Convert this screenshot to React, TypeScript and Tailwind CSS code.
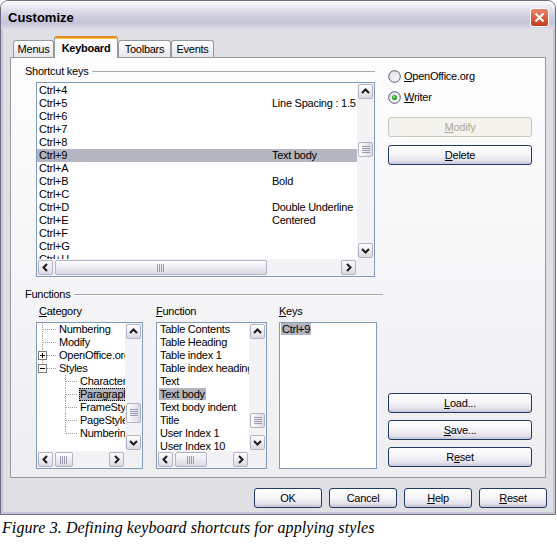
import React from "react";
import clsx from "clsx";

type Dir = "up" | "down" | "left" | "right";

function Arrow({ dir }: { dir: Dir }) {
  const pts = {
    up: "1,6 4.5,2.5 8,6",
    down: "1,3 4.5,6.5 8,3",
    left: "6,1 2.5,4.5 6,8",
    right: "3,1 6.5,4.5 3,8",
  }[dir];
  return (
    <svg width="9" height="9" viewBox="0 0 9 9">
      <polyline points={pts} fill="none" stroke="#1a1a1a" strokeWidth="2" />
    </svg>
  );
}

function ScrollButton({ dir }: { dir: Dir }) {
  return (
    <div className="w-[17px] h-[17px] p-px shrink-0">
      <div className="w-full h-full rounded-[2px] border border-[#b3b3c6] bg-gradient-to-b from-white to-[#d9d9e4] flex items-center justify-center">
        <Arrow dir={dir} />
      </div>
    </div>
  );
}

function Grip({ vertical }: { vertical?: boolean }) {
  if (vertical) {
    return (
      <svg width="8" height="8" viewBox="0 0 8 8">
        {[0.5, 2.5, 4.5, 6.5].map((y) => (
          <line key={y} x1="0" x2="8" y1={y} y2={y} stroke="#9a9aae" />
        ))}
      </svg>
    );
  }
  return (
    <svg width="8" height="8" viewBox="0 0 8 8">
      {[0.5, 2.5, 4.5, 6.5].map((x) => (
        <line key={x} y1="0" y2="8" x1={x} x2={x} stroke="#9a9aae" />
      ))}
    </svg>
  );
}

function VScroll({ spacer, thumb }: { spacer: string; thumb: string }) {
  return (
    <div className="w-[17px] flex flex-col bg-[#f3f3f6]">
      <ScrollButton dir="up" />
      <div className={spacer} />
      <div className={clsx("w-[17px] p-px shrink-0", thumb)}>
        <div className="w-full h-full rounded-[2px] border border-[#b3b3c6] bg-gradient-to-r from-white to-[#d9d9e4] flex items-center justify-center">
          <Grip vertical />
        </div>
      </div>
      <div className="flex-1" />
      <ScrollButton dir="down" />
    </div>
  );
}

function HScroll({ thumb }: { thumb: string }) {
  return (
    <div className="h-[17px] flex bg-[#f3f3f6]">
      <ScrollButton dir="left" />
      <div className={clsx("h-[17px] p-px shrink-0", thumb)}>
        <div className="w-full h-full rounded-[2px] border border-[#b3b3c6] bg-gradient-to-b from-white to-[#d9d9e4] flex items-center justify-center">
          <Grip />
        </div>
      </div>
      <div className="flex-1" />
      <ScrollButton dir="right" />
    </div>
  );
}

function Btn({
  children,
  className,
  disabled,
}: {
  children: React.ReactNode;
  className?: string;
  disabled?: boolean;
}) {
  return (
    <div
      className={clsx(
        "h-[20px] rounded-[3px] border flex items-center justify-center",
        disabled
          ? "border-[#c9c7ba] bg-[#f4f3ee] text-[#aca899]"
          : "border-[#1f3c66] bg-[linear-gradient(180deg,#ffffff_0%,#f6f6f9_45%,#e4e3ed_80%,#c6c5d6_100%)]",
        className
      )}>
      {children}
    </div>
  );
}

function Radio({ checked, id }: { checked?: boolean; id: string }) {
  return (
    <svg width="13" height="13" viewBox="0 0 13 13">
      <defs>
        <linearGradient id={id} x1="0" y1="0" x2="1" y2="1">
          <stop offset="0" stopColor="#dcdce4" />
          <stop offset="1" stopColor="#ffffff" />
        </linearGradient>
      </defs>
      <circle cx="6.5" cy="6.5" r="5.8" fill={`url(#${id})`} stroke="#4a5a72" />
      {checked && (
        <>
          <circle cx="6.5" cy="6.5" r="2.6" fill="#2ea82e" />
          <circle cx="6" cy="6" r="1" fill="#9be49b" />
        </>
      )}
    </svg>
  );
}

function U({ children }: { children: React.ReactNode }) {
  return <span className="underline underline-offset-[1px]">{children}</span>;
}

function GroupLabel({ children }: { children: React.ReactNode }) {
  return (
    <div className="h-[13px] flex items-center gap-[4px]">
      <span className="whitespace-nowrap">{children}</span>
      <div className="flex-1 border-t border-[#a8a8ae] border-b border-b-white" />
    </div>
  );
}

const shortcuts: [string, string][] = [
  ["Ctrl+4", ""],
  ["Ctrl+5", "Line Spacing : 1.5"],
  ["Ctrl+6", ""],
  ["Ctrl+7", ""],
  ["Ctrl+8", ""],
  ["Ctrl+9", "Text body"],
  ["Ctrl+A", ""],
  ["Ctrl+B", "Bold"],
  ["Ctrl+C", ""],
  ["Ctrl+D", "Double Underline"],
  ["Ctrl+E", "Centered"],
  ["Ctrl+F", ""],
  ["Ctrl+G", ""],
  ["Ctrl+H", ""],
];

type TreeKind = "root" | "plus" | "minus" | "child" | "last";

const tree: { kind: TreeKind; label: string; selected?: boolean }[] = [
  { kind: "root", label: "Numbering" },
  { kind: "root", label: "Modify" },
  { kind: "plus", label: "OpenOffice.org" },
  { kind: "minus", label: "Styles" },
  { kind: "child", label: "Character Styles" },
  { kind: "child", label: "Paragraph Styles", selected: true },
  { kind: "child", label: "FrameStyles" },
  { kind: "child", label: "PageStyles" },
  { kind: "last", label: "NumberingStyles" },
];

const functions = [
  "Table Contents",
  "Table Heading",
  "Table index 1",
  "Table index heading",
  "Text",
  "Text body",
  "Text body indent",
  "Title",
  "User Index 1",
  "User Index 10",
];

function TreeLines({ kind }: { kind: TreeKind }) {
  const dot = { stroke: "#a3a3a3", strokeDasharray: "1 1" };
  const isChild = kind === "child" || kind === "last";
  return (
    <svg
      width={isChild ? 42 : 21}
      height="13"
      viewBox={`0 0 ${isChild ? 42 : 21} 13`}
      className="shrink-0">
      {kind === "root" && (
        <>
          <line x1="5.5" x2="5.5" y1="0" y2="13" {...dot} />
          <line x1="6" x2="20" y1="6.5" y2="6.5" {...dot} />
        </>
      )}
      {(kind === "plus" || kind === "minus") && (
        <>
          <line x1="5.5" x2="5.5" y1="0" y2="2" {...dot} />
          {kind === "plus" && <line x1="5.5" x2="5.5" y1="11" y2="13" {...dot} />}
          <line x1="10" x2="20" y1="6.5" y2="6.5" {...dot} />
          <rect x="1.5" y="2.5" width="8" height="8" fill="#fff" stroke="#7b7b7b" />
          <line x1="3" x2="8" y1="6.5" y2="6.5" stroke="#000" />
          {kind === "plus" && <line x1="5.5" x2="5.5" y1="4" y2="9" stroke="#000" />}
        </>
      )}
      {isChild && (
        <>
          <line x1="28.5" x2="28.5" y1="0" y2={kind === "last" ? 7 : 13} {...dot} />
          <line x1="29" x2="41" y1="6.5" y2="6.5" {...dot} />
        </>
      )}
    </svg>
  );
}

function Tab({
  children,
  selected,
  className,
}: {
  children: React.ReactNode;
  selected?: boolean;
  className?: string;
}) {
  return (
    <div
      className={clsx(
        "flex items-center justify-center rounded-t-[3px] border-x border-[#919b9c]",
        selected
          ? "relative z-10 h-[22px] -mb-px bg-[#fcfcfe] font-bold border-t-2 border-t-[#e68b2c] shadow-[inset_0_1px_0_#ffc73c] pt-px"
          : "h-[17px] border-t bg-gradient-to-b from-white to-[#e6e6eb]",
        className
      )}>
      {children}
    </div>
  );
}

export default function App() {
  return (
    <div className="w-[557px] h-[550px] bg-white font-['Liberation_Sans',Arial,sans-serif] text-[11px] leading-[13px] tracking-[-0.25px] text-black">
      <div className="w-[556px] border border-[#6e6d85] rounded-t-[8px] overflow-hidden">
        <div className="h-[28px] pt-[4px] pl-[7px] pr-[6px] flex items-center justify-between bg-[linear-gradient(180deg,#fdfdfe_0%,#e6e6ee_25%,#d0cfe0_55%,#c4c3d7_78%,#dcdbe6_100%)]">
          <span className="font-bold text-[13px] tracking-normal">Customize</span>
          <div className="w-[19px] h-[19px] rounded-[3px] border border-white bg-gradient-to-b from-[#e9866a] to-[#c2391c] flex items-center justify-center">
            <svg width="11" height="11" viewBox="0 0 11 11">
              <path d="M1.5 1.5 L9.5 9.5 M9.5 1.5 L1.5 9.5" stroke="#fff" strokeWidth="2" />
            </svg>
          </div>
        </div>
        <div className="bg-[#e0dfe3] border-x-2 border-b-2 border-[#c6c5d5] px-[7px] pt-[7px] pb-[4px]">
          <div className="flex items-end h-[21px] pl-[3px]">
            <Tab className="w-[41px]">Menus</Tab>
            <Tab selected className="w-[64px]">
              Keyboard
            </Tab>
            <Tab className="w-[53px]">Toolbars</Tab>
            <Tab className="w-[43px]">Events</Tab>
          </div>
          <div className="h-[421px] border border-[#919b9c] bg-[linear-gradient(180deg,#fdfdfe,#eeeef1)] flex pl-[14px]">
            <div className="w-[358px] flex flex-col pt-[7px]">
              <div className="w-[350px]">
                <GroupLabel>Shortcut keys</GroupLabel>
              </div>
              <div className="mt-[4px] ml-[11px] w-[339px] h-[195px] border border-[#7f9db9] bg-white grid grid-cols-[1fr_17px] grid-rows-[1fr_17px]">
                <div className="overflow-hidden pt-px">
                  {shortcuts.map(([key, fn]) => (
                    <div
                      key={key}
                      className={clsx(
                        "h-[13px] flex whitespace-nowrap",
                        key === "Ctrl+9" && "bg-[#b3b5c1]"
                      )}>
                      <span className="w-[235px] pl-[2px] shrink-0">{key}</span>
                      <span>{fn}</span>
                    </div>
                  ))}
                </div>
                <VScroll spacer="h-[41px]" thumb="h-[17px]" />
                <HScroll thumb="w-[214px]" />
                <div className="bg-[#f1f1f4]" />
              </div>

              <div className="mt-[11px]">
                <GroupLabel>Functions</GroupLabel>
              </div>
              <div className="mt-[4px] ml-[11px] flex h-[13px]">
                <span className="w-[107px] mr-[13px] pl-[3px]">
                  <U>C</U>ategory
                </span>
                <span className="w-[111px] mr-[12px]">
                  <U>F</U>unction
                </span>
                <span className="w-[98px]">
                  <U>K</U>eys
                </span>
              </div>
              <div className="mt-[4px] ml-[11px] flex">
                <div className="w-[107px] mr-[13px] h-[147px] border border-[#7f9db9] bg-white grid grid-cols-[1fr_17px] grid-rows-[1fr_17px]">
                  <div className="overflow-hidden">
                    {tree.map((t) => (
                      <div key={t.label} className="h-[13px] flex whitespace-nowrap">
                        <TreeLines kind={t.kind} />
                        <span
                          className={clsx(
                            "px-px",
                            t.selected &&
                              "bg-[#b3b5c1] outline outline-1 outline-dotted outline-black -outline-offset-1"
                          )}>
                          {t.label}
                        </span>
                      </div>
                    ))}
                  </div>
                  <VScroll spacer="h-[62px]" thumb="h-[22px]" />
                  <HScroll thumb="w-[20px]" />
                  <div className="bg-[#f1f1f4]" />
                </div>
                <div className="w-[111px] mr-[12px] h-[147px] border border-[#7f9db9] bg-white grid grid-cols-[1fr_17px] grid-rows-[1fr_17px]">
                  <div className="overflow-hidden pl-[2px]">
                    {functions.map((f) => (
                      <div key={f} className="h-[13px] whitespace-nowrap">
                        <span className={clsx("px-px", f === "Text body" && "bg-[#b3b5c1]")}>{f}</span>
                      </div>
                    ))}
                  </div>
                  <VScroll spacer="h-[72px]" thumb="h-[17px]" />
                  <HScroll thumb="w-[34px]" />
                  <div className="bg-[#f1f1f4]" />
                </div>
                <div className="w-[98px] h-[147px] border border-[#7f9db9] bg-white">
                  <div className="h-[13px] pl-px">
                    <span className="px-px bg-[#b3b5c1]">Ctrl+9</span>
                  </div>
                </div>
              </div>
            </div>

            <div className="w-[144px] ml-[5px] flex flex-col justify-between pt-[12px] pb-[10px]">
              <div className="flex flex-col">
                <div className="h-[13px] flex items-center gap-[3px]">
                  <Radio id="r1" />
                  <span>
                    <U>O</U>penOffice.org
                  </span>
                </div>
                <div className="h-[13px] mt-[8px] flex items-center gap-[3px]">
                  <Radio id="r2" checked />
                  <span>
                    <U>W</U>riter
                  </span>
                </div>
                <Btn disabled className="mt-[13px]">
                  <span>
                    <U>M</U>odify
                  </span>
                </Btn>
                <Btn className="mt-[8px]">
                  <span>
                    <U>D</U>elete
                  </span>
                </Btn>
              </div>
              <div className="flex flex-col gap-[7px]">
                <Btn>
                  <span>
                    <U>L</U>oad...
                  </span>
                </Btn>
                <Btn>
                  <span>
                    <U>S</U>ave...
                  </span>
                </Btn>
                <Btn>
                  <span>
                    R<U>e</U>set
                  </span>
                </Btn>
              </div>
            </div>
          </div>
          <div className="flex justify-end gap-[7px] mt-[10px] -mr-px">
            <Btn className="w-[68px]">OK</Btn>
            <Btn className="w-[68px]">Cancel</Btn>
            <Btn className="w-[68px]">
              <span>
                <U>H</U>elp
              </span>
            </Btn>
            <Btn className="w-[68px]">
              <span>
                <U>R</U>eset
              </span>
            </Btn>
          </div>
        </div>
      </div>
      <p className="mt-[4px] ml-[2px] font-['Liberation_Serif','Times_New_Roman',serif] italic text-[16px] leading-[18px] tracking-[0.1px]">
        Figure 3. Defining keyboard shortcuts for applying styles
      </p>
    </div>
  );
}
